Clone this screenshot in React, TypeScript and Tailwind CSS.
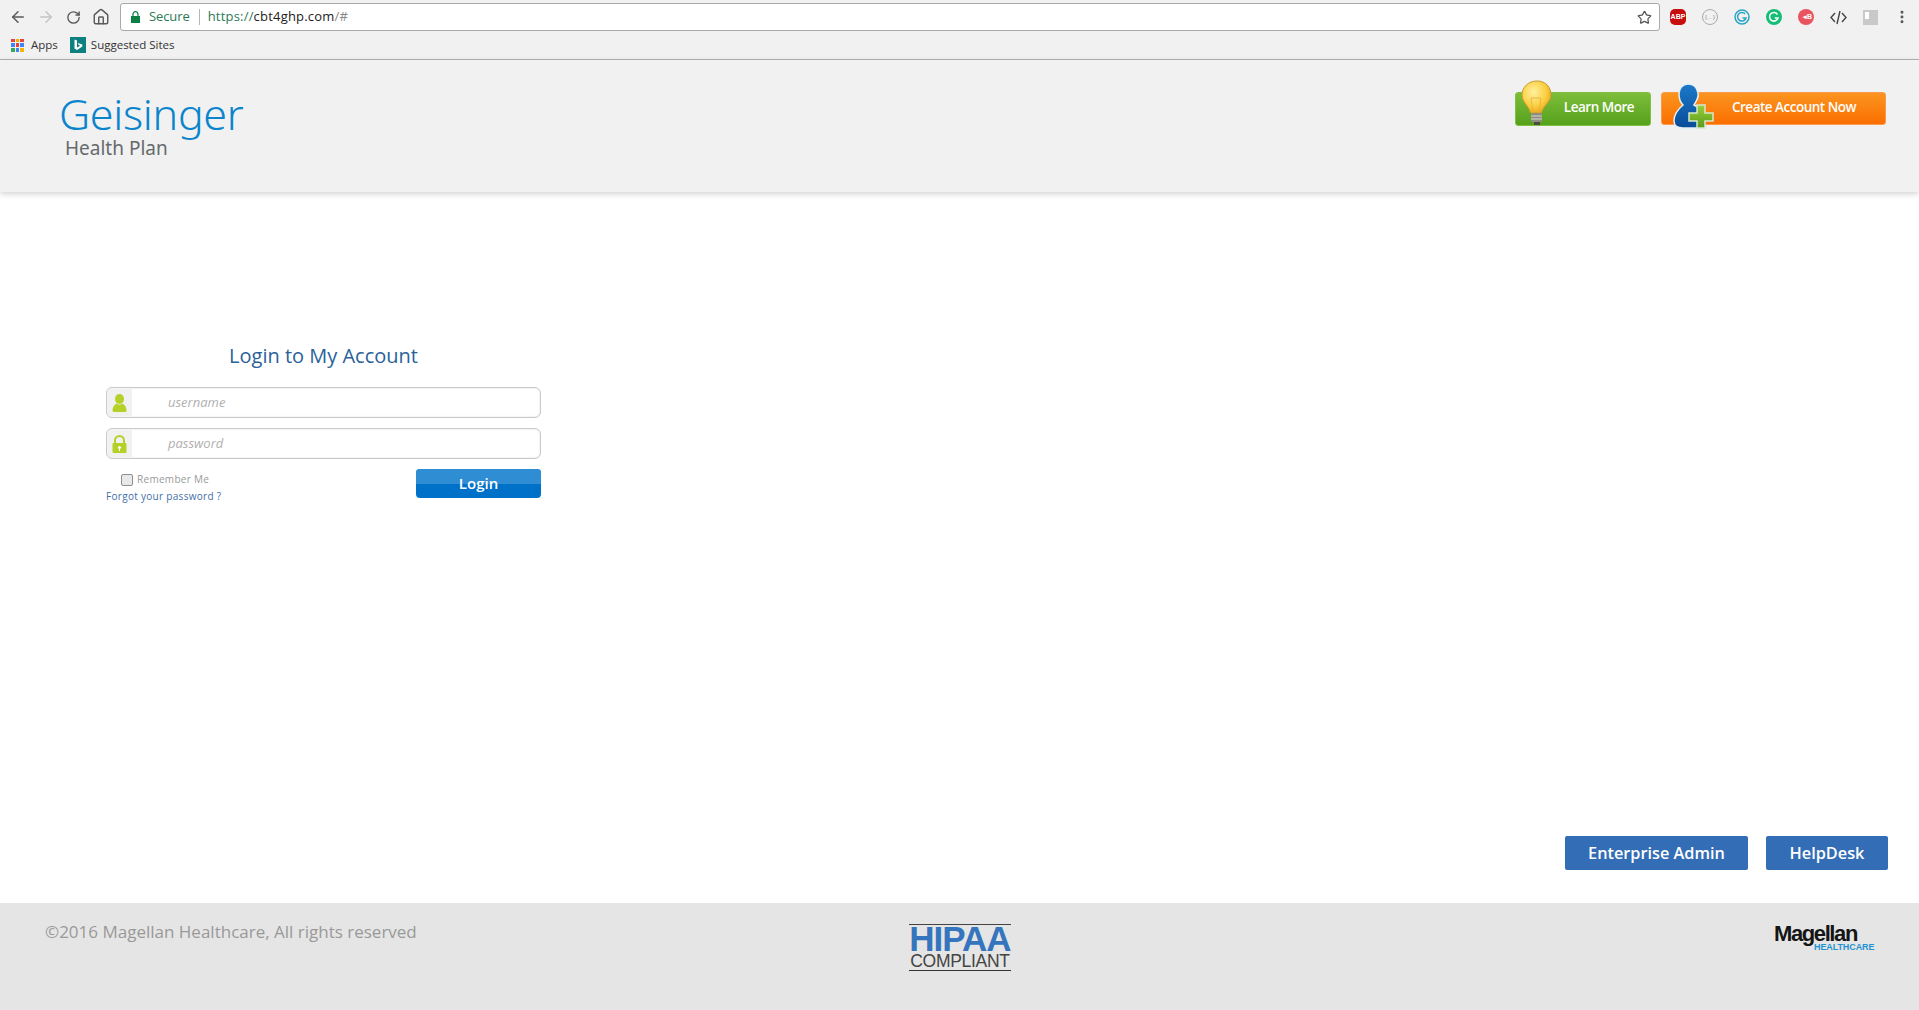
import { ArrowLeft, ArrowRight, RotateCw, Home, Star, EllipsisVertical } from "lucide-react";

const OPEN = "font-['Open_Sans',sans-serif]";

const AppsGrid = () => {
    const colors = ["#e8453c", "#f4b400", "#e8453c", "#4285f4", "#e8453c", "#4285f4", "#34a853", "#4285f4", "#f4b400"];
    return (
        <div className="grid h-[13px] w-[13px] grid-cols-3 gap-[1px]">
            {colors.map((c, i) => (
                <div key={i} style={{ background: c }} />
            ))}
        </div>
    );
};

const Bing = () => (
    <svg width="16" height="16" viewBox="0 0 16 16">
        <rect width="16" height="16" fill="#0f8080" />
        <path d="M4.5 2.5 L7 3.4 V10.5 L10.3 8.7 L8.6 7.9 L7.8 6 L12.3 7.5 V9.6 L7 13 L4.5 11.6 Z" fill="#fff" />
    </svg>
);

const Extensions = () => (
    <div className="flex items-center">
        <div className="flex w-8 justify-center">
            <div className="flex h-4 w-4 items-center justify-center rounded-[5px] bg-[#c70d0d] font-['Liberation_Sans',sans-serif] text-[7px] font-bold text-white">ABP</div>
        </div>
        <div className="flex w-8 justify-center">
            <div className="flex h-4 w-4 items-center justify-center rounded-full border border-[#aaaaaa] font-['Liberation_Sans',sans-serif] text-[6px] text-[#888888]">{"{…}"}</div>
        </div>
        <div className="flex w-8 justify-center">
            <svg width="16" height="16" viewBox="0 0 16 16" fill="none">
                <circle cx="8" cy="8" r="7" fill="none" stroke="#2ba5c4" strokeWidth="1.500" />
                <path d="M11.200 5 A4.300 4.300 0 1 0 12 9 H8.500" stroke="#2ba5c4" strokeWidth="1.500" />
            </svg>
        </div>
        <div className="flex w-8 justify-center">
            <svg width="16" height="16" viewBox="0 0 16 16" fill="none">
                <circle cx="8" cy="8" r="8" fill="#15bd76" />
                <path d="M11.500 5.500 A4.300 4.300 0 1 0 12 9 H8.800" stroke="#fff" strokeWidth="1.500" />
            </svg>
        </div>
        <div className="flex w-8 justify-center">
            <div className="flex h-4 w-4 items-center justify-end rounded-full bg-[#e9555f] pr-[2px] font-['Liberation_Sans',sans-serif] text-[7px] font-bold text-white">◂B</div>
        </div>
        <div className="flex w-8 justify-center">
            <svg width="17" height="17" viewBox="0 0 17 17" fill="none" stroke="#444444" strokeWidth="1.400">
                <path d="M5 4 L1 8.500 L5 13 M12 4 L16 8.500 L12 13 M10 2 L7 15" />
            </svg>
        </div>
        <div className="flex w-8 justify-center">
            <div className="flex h-[15px] w-[15px] items-start justify-start bg-[#c9c9c9] pl-[2px] pt-[2px]">
                <div className="h-[7px] w-[4px] bg-white" />
            </div>
        </div>
        <div className="flex w-8 justify-center">
            <EllipsisVertical size={16} strokeWidth={2.4} className="text-[#555555]" />
        </div>
    </div>
);

const BrowserChrome = () => (
    <div className="h-[60px] shrink-0 border-b border-[#b4b4b4] bg-[#f1f1f1]">
        <div className="flex h-[33px] items-center pr-[1px] pt-[1px]">
            <div className="flex w-[120px] items-center pl-[9px]">
                <ArrowLeft size={18} strokeWidth={2} className="text-[#5a5a5a]" />
                <ArrowRight size={18} strokeWidth={2} className="ml-[10px] text-[#c4c4c4]" />
                <RotateCw size={15} strokeWidth={2.2} className="ml-[11px] text-[#5a5a5a]" />
                <Home size={18} strokeWidth={1.9} className="ml-[11px] text-[#5a5a5a]" />
            </div>
            <div className={`flex h-[28px] w-[1540px] items-center rounded-[3px] border border-[#a9a9a9] bg-white pl-[10px] text-[13px] ${OPEN}`}>
                <svg width="9" height="12" viewBox="0 0 9 12">
                    <path d="M2 5 V3.200 a2.500 2.500 0 0 1 5 0 V5" fill="none" stroke="#0b8043" strokeWidth="1.200" />
                    <rect y="5" width="9" height="7" fill="#0b8043" />
                </svg>
                <span className="ml-[9px] tracking-[-0.1px] text-[#2c7a55]">Secure</span>
                <div className="ml-[9px] h-[16px] w-px bg-[#b5b5b5]" />
                <span className="ml-[8px] tracking-[0.2px] text-[#2c7a55]">
                    https://<span className="text-[#222222]">cbt4ghp.com</span>
                    <span className="text-[#888888]">/#</span>
                </span>
                <Star size={15} strokeWidth={2} className="ml-auto mr-[7px] text-[#555555]" />
            </div>
            <div className="ml-auto">
                <Extensions />
            </div>
        </div>
        <div className={`flex h-[25px] items-center pb-[1px] pl-[11px] text-[11.500px] text-[#333333] ${OPEN}`}>
            <AppsGrid />
            <span className="ml-[7px]">Apps</span>
            <div className="ml-[12px]">
                <Bing />
            </div>
            <span className="ml-[5px]">Suggested Sites</span>
        </div>
    </div>
);

const Bulb = () => (
    <svg width="32" height="47" viewBox="0 0 32 47">
        <defs>
            <radialGradient id="bulbFill" cx="0.4" cy="0.35" r="0.7">
                <stop offset="0" stopColor="#fff0a0" />
                <stop offset="0.6" stopColor="#fbd044" />
                <stop offset="1" stopColor="#e8a414" />
            </radialGradient>
        </defs>
        <path d="M16 1 C7 1 1 7.500 1 15 C1 22 7 25 9.500 33 L20.500 33 C22.500 25 30 22 30 15 C30 7.500 25 1 16 1 Z" fill="url(#bulbFill)" stroke="#c99a2e" strokeWidth="1" />
        <path d="M12 33 L10 18 M18 33 L20 18 M10 18 H20" stroke="#e2b13c" strokeWidth="0.8" fill="none" />
        <rect x="10" y="33" width="11" height="9" rx="1.500" fill="#8d8d80" />
        <path d="M10 36 H21 M10 39 H21" stroke="#d8d8ce" strokeWidth="1" />
        <rect x="13" y="42" width="6" height="3" fill="#4c4c44" />
    </svg>
);

const PersonPlus = () => (
    <svg width="42" height="47" viewBox="0 0 42 47">
        <defs>
            <linearGradient id="personFill" x1="0" y1="0" x2="0" y2="1">
                <stop offset="0" stopColor="#1b79c9" />
                <stop offset="1" stopColor="#0a4c98" />
            </linearGradient>
            <linearGradient id="plusFill" x1="0" y1="0" x2="0" y2="1">
                <stop offset="0" stopColor="#9bcf3a" />
                <stop offset="1" stopColor="#5a9a1a" />
            </linearGradient>
        </defs>
        <path d="M10 23 C4 28 1 33 1 39 C1 44 5 46 10 46 H24 C30 46 32 40 32 34 C32 30 27 26 21 23 C24 18 26 15 25 11 C24 5 20 2 15 2 C10 2 6 6 6 12 C6 16 7 20 10 23 Z" fill="url(#personFill)" stroke="#e4f0f4" strokeWidth="1.500" />
        <path d="M24 23 H32 V31 H40 V39 H32 V46 H24 V39 H16 V31 H24 Z" fill="url(#plusFill)" stroke="#d6e8d0" strokeWidth="1.500" />
    </svg>
);

const PageHeader = () => (
    <div className="relative z-10 flex h-[132px] shrink-0 items-start justify-between bg-[#f1f1f1] shadow-[0_2px_6px_rgba(0,0,0,0.18)]">
        <div className="pl-[59px] pt-[29px]">
            <div className="font-['Noto_Sans',sans-serif] text-[43px] font-light leading-[50px] tracking-[-0.3px] text-[#0a84cc]">Geisinger</div>
            <div className="-mt-[3px] pl-[6px] font-['Noto_Sans',sans-serif] text-[19px] leading-[24px] text-[#666a6d]">Health Plan</div>
        </div>
        <div className={`flex gap-[10px] pr-[33px] pt-[32px] text-[13.500px] font-semibold tracking-[-0.5px] text-white ${OPEN}`}>
            <div className="relative flex h-[34px] w-[136px] items-center justify-end rounded-[3px] border border-[#7fc03f] bg-[linear-gradient(#7dbd3a,#55a11c)] pb-[3px] pr-[16px]">
                Learn More
                <div className="absolute -top-[13px] left-[5px]">
                    <Bulb />
                </div>
            </div>
            <div className="relative flex h-[33px] w-[225px] items-center justify-end rounded-[3px] border border-[#fb9a4a] bg-[linear-gradient(#fb9420,#fb6f00)] pb-[3px] pr-[29px]">
                Create Account Now
                <div className="absolute -top-[11px] left-[11px]">
                    <PersonPlus />
                </div>
            </div>
        </div>
    </div>
);

const LoginField = ({ placeholder, icon }: { placeholder: string; icon: React.ReactNode }) => (
    <div className="flex h-[31px] items-stretch overflow-hidden rounded-[6px] border border-[#c9c9c9] bg-white p-px shadow-[inset_0_0_2px_rgba(0,0,0,0.15)]">
        <div className="flex w-[24px] items-center justify-center bg-[#f1f1f1] pr-[2px]">{icon}</div>
        <div className={`pl-[36px] text-[13px] italic leading-[27px] text-[#b0b0b0] ${OPEN}`}>{placeholder}</div>
    </div>
);

const LoginForm = () => (
    <div className={`ml-[106px] w-[435px] pt-[149px] ${OPEN}`}>
        <div className="text-center text-[20px] leading-[30px] text-[#2a6199]">Login to My Account</div>
        <div className="mt-[16px] flex flex-col gap-[10px]">
            <LoginField
                placeholder="username"
                icon={
                    <svg width="15" height="18" viewBox="0 0 15 18" fill="#b5d128">
                        <ellipse cx="7.500" cy="5" rx="4.500" ry="5" />
                        <path d="M4.500 9.500 C1.500 11 0.500 14 0.500 16.500 C0.500 17.500 1.500 18 3 18 H12 C13.500 18 14.500 17.500 14.500 16.500 C14.500 14 13.500 11 10.500 9.500 C9 11 6 11 4.500 9.500 Z" />
                    </svg>
                }
            />
            <LoginField
                placeholder="password"
                icon={
                    <svg width="15" height="18" viewBox="0 0 15 18">
                        <path d="M3 8 V5.500 a4.500 4.500 0 0 1 9 0 V8" fill="none" stroke="#b5d128" strokeWidth="2" />
                        <rect x="0.500" y="8" width="14" height="10" rx="1" fill="#b5d128" />
                        <circle cx="7.500" cy="12.500" r="1.500" fill="#fff" />
                        <rect x="7" y="13" width="1" height="3" fill="#fff" />
                    </svg>
                }
            />
        </div>
        <div className="mt-[10px] flex items-start justify-between">
            <div>
                <div className="mt-[4px] flex items-center pl-[15px]">
                    <div className="h-[12px] w-[12px] rounded-[2px] border border-[#8f8f8f] bg-[#e8e8e8]" />
                    <span className="ml-[4px] text-[10px] leading-[13px] tracking-[0.3px] text-[#999999]">Remember Me</span>
                </div>
                <div className="mt-[3px] text-[10px] leading-[14px] tracking-[0.3px] text-[#3f6fa8]">Forgot your password ?</div>
            </div>
            <div className="relative h-[29px] w-[125px] overflow-hidden rounded-[4px] bg-[#0071c9] text-center text-[15px] font-semibold leading-[29px] text-white">
                <div className="absolute inset-x-0 top-0 h-[15px] bg-[#2f8dd4]" />
                <span className="relative">Login</span>
            </div>
        </div>
    </div>
);

const HipaaLogo = () => (
    <div className="flex w-[104px] flex-col items-center font-['Liberation_Sans',sans-serif]">
        <div className="h-px w-[102px] bg-[#444444]" />
        <div className="text-[35px] font-bold leading-[28px] tracking-[-1px] text-[#3575bd]">HIPAA</div>
        <div className="mt-[1px] text-[17.500px] leading-[14px] tracking-[-0.3px] text-[#444444]">COMPLIANT</div>
        <div className="mt-[2px] h-px w-[102px] bg-[#333333]" />
    </div>
);

const MagellanLogo = () => (
    <div className="flex w-[101px] flex-col font-['Liberation_Sans',sans-serif]">
        <div className="text-[22px] font-bold leading-[19px] tracking-[-1.4px] text-[#151515]">Magellan</div>
        <div className="pl-[40px] text-[9px] font-bold leading-[9px] tracking-[-0.1px] whitespace-nowrap text-[#1f93d1]">HEALTHCARE</div>
    </div>
);

const PageFooter = () => (
    <div className="grid h-[107px] shrink-0 grid-cols-3 bg-[#e5e5e5]">
        <div className={`pl-[45px] pt-[17px] text-[17px] leading-[24px] text-[#999999] ${OPEN}`}>©2016 Magellan Healthcare, All rights reserved</div>
        <div className="flex justify-center pl-[1px] pt-[21px]">
            <HipaaLogo />
        </div>
        <div className="flex justify-end pr-[44px] pt-[21px]">
            <MagellanLogo />
        </div>
    </div>
);

export default function App() {
    return (
        <div className="flex h-[1010px] flex-col overflow-hidden bg-white">
            <BrowserChrome />
            <PageHeader />
            <div className="flex flex-1 flex-col justify-between">
                <LoginForm />
                <div className={`flex justify-end gap-[18px] pb-[33px] pr-[31px] text-[16.300px] font-semibold text-white ${OPEN}`}>
                    <div className="flex h-[34px] w-[183px] items-center justify-center rounded-[2px] bg-[#326db5]">Enterprise Admin</div>
                    <div className="flex h-[34px] w-[122px] items-center justify-center rounded-[2px] bg-[#326db5]">HelpDesk</div>
                </div>
            </div>
            <PageFooter />
        </div>
    );
}
